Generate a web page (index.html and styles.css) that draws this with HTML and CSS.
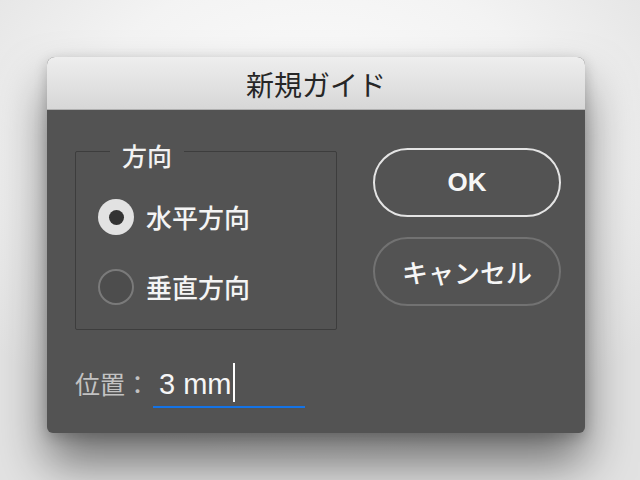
FILE: index.html
```html
<!DOCTYPE html>
<html lang="ja">
<head>
<meta charset="utf-8">
<title>新規ガイド</title>
<link rel="stylesheet" href="styles.css">
</head>
<body>
<div class="window">
  <div class="titlebar">新規ガイド</div>
  <div class="content">
    <div class="main">
      <fieldset class="group">
        <legend class="legend">方向</legend>
        <div class="radio-row">
          <span class="radio radio-on"><span class="dot"></span></span>
          <span class="radio-label">水平方向</span>
        </div>
        <div class="radio-row">
          <span class="radio radio-off"></span>
          <span class="radio-label">垂直方向</span>
        </div>
      </fieldset>
      <div class="buttons">
        <div class="btn btn-ok">OK</div>
        <div class="btn btn-cancel">キャンセル</div>
      </div>
    </div>
    <div class="position">
      <span class="pos-label">位置：</span>
      <span class="pos-input"><span class="pos-value">3 mm</span><span class="caret"></span></span>
    </div>
  </div>
</div>
</body>
</html>
```

FILE: styles.css
```css
html, body {
  margin: 0;
  padding: 0;
}
body {
  width: 640px;
  height: 480px;
  overflow: hidden;
  background: radial-gradient(ellipse 420px 320px at 316px 140px, #fdfdfd 0%, #f3f3f3 55%, #e2e2e2 100%);
  font-family: "Noto Sans CJK JP", "Noto Sans", sans-serif;
}
.window {
  margin: 57px 0 0 47px;
  width: 538px;
  height: 376px;
  border-radius: 8px 8px 6px 6px;
  background: #535353;
  box-shadow: 0 30px 48px rgba(0, 0, 0, 0.5), 0 4px 14px rgba(0, 0, 0, 0.2);
  display: flex;
  flex-direction: column;
  overflow: hidden;
}
.titlebar {
  height: 53px;
  flex: none;
  box-sizing: border-box;
  border-bottom: 1px solid #b0b0b0;
  background: linear-gradient(#eeeeee, #d7d7d7);
  color: #262626;
  font-size: 28px;
  line-height: 54px;
  text-align: center;
}
.content {
  flex: 1;
  display: flex;
  flex-direction: column;
  padding: 0 24px 0 28px;
}
.main {
  display: flex;
  justify-content: space-between;
  align-items: flex-start;
}
.group {
  margin: 25px 0 0 0;
  width: 262px;
  box-sizing: border-box;
  border: 1px solid #3d3d3d;
  border-radius: 2px;
  padding: 31px 0 24px 22px;
  min-inline-size: 0;
}
.legend {
  margin-left: 12px;
  padding: 8px 12px 0;
  font-size: 25px;
  line-height: 25px;
  font-weight: 500;
  color: #f2f2f2;
}
.radio-row {
  display: flex;
  align-items: center;
  height: 36px;
}
.radio-row + .radio-row {
  margin-top: 34px;
}
.radio {
  width: 36px;
  height: 36px;
  box-sizing: border-box;
  border-radius: 50%;
  display: flex;
  align-items: center;
  justify-content: center;
  flex: none;
}
.radio-on {
  background: #e2e2e2;
}
.dot {
  width: 15px;
  height: 15px;
  border-radius: 50%;
  background: #333333;
}
.radio-off {
  border: 2px solid #7a7a7a;
  background: #4d4d4d;
}
.radio-label {
  margin-left: 12px;
  font-size: 26px;
  line-height: 36px;
  font-weight: 500;
  color: #f4f4f4;
}
.buttons {
  margin-top: 38px;
  display: flex;
  flex-direction: column;
  gap: 20px;
}
.btn {
  width: 188px;
  height: 69px;
  box-sizing: border-box;
  border-radius: 35px;
  display: flex;
  align-items: center;
  justify-content: center;
  color: #f6f6f6;
}
.btn-ok {
  border: 2px solid #e4e4e4;
  font-family: "Liberation Sans", "Noto Sans CJK JP", sans-serif;
  font-weight: bold;
  font-size: 26px;
}
.btn-cancel {
  border: 2px solid #727272;
  font-size: 26px;
  font-weight: 500;
}
.position {
  margin-top: 36px;
  display: flex;
  align-items: baseline;
}
.pos-label {
  font-size: 25px;
  line-height: 30px;
  color: #c2c2c2;
  width: 78px;
  flex: none;
}
.pos-input {
  display: block;
  width: 152px;
  box-sizing: border-box;
  padding: 0 0 4px 6px;
  border-bottom: 2px solid #1473e6;
  font-family: "Liberation Sans", Arial, sans-serif;
  font-size: 29px;
  line-height: 36px;
  color: #f6f6f6;
}
.caret {
  display: inline-block;
  width: 2px;
  height: 39px;
  margin: -8px 0 0 1px;
  background: #ffffff;
  vertical-align: -8px;
}
```
